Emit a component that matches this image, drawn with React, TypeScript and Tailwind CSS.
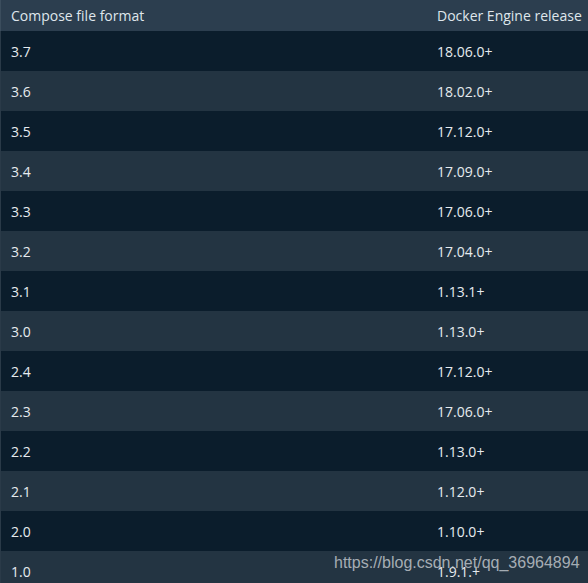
const rows: [string, string][] = [
  ['3.7', '18.06.0+'],
  ['3.6', '18.02.0+'],
  ['3.5', '17.12.0+'],
  ['3.4', '17.09.0+'],
  ['3.3', '17.06.0+'],
  ['3.2', '17.04.0+'],
  ['3.1', '1.13.1+'],
  ['3.0', '1.13.0+'],
  ['2.4', '17.12.0+'],
  ['2.3', '17.06.0+'],
  ['2.2', '1.13.0+'],
  ['2.1', '1.12.0+'],
  ['2.0', '1.10.0+'],
  ['1.0', '1.9.1.+'],
];

export default function App() {
  return (
    <div className="relative w-[588px] h-[583px] overflow-hidden bg-[#0b1d2c] font-['Open_Sans',sans-serif] text-[14px] text-[#e6ebef]">
      {/* Header */}
      <div className="flex h-[31px] items-center bg-[#2c3e4f] border-l border-[#3b4d5d]">
        <div className="w-[426px] pl-[10px] text-[#dfe6ec]">Compose file format</div>
        <div className="flex-1 pl-[10px] text-[#dfe6ec]">Docker Engine release</div>
      </div>

      {rows.map(([compose, engine], i) => (
        <div
          key={compose}
          className={`flex h-[40px] items-center border-l border-[#2a3a48] ${
            i % 2 === 0 ? 'bg-[#0b1d2c]' : 'bg-[#233442]'
          }`}
        >
          <div className="w-[426px] pl-[10px]">{compose}</div>
          <div className="flex-1 pl-[10px]">{engine}</div>
        </div>
      ))}

      {/* Watermark */}
      <div className="absolute left-[334px] top-[551px] font-['Liberation_Sans',Arial,sans-serif] text-[16px] text-[#c9ced3]/80">
        https://blog.csdn.net/qq_36964894
      </div>
    </div>
  );
}
